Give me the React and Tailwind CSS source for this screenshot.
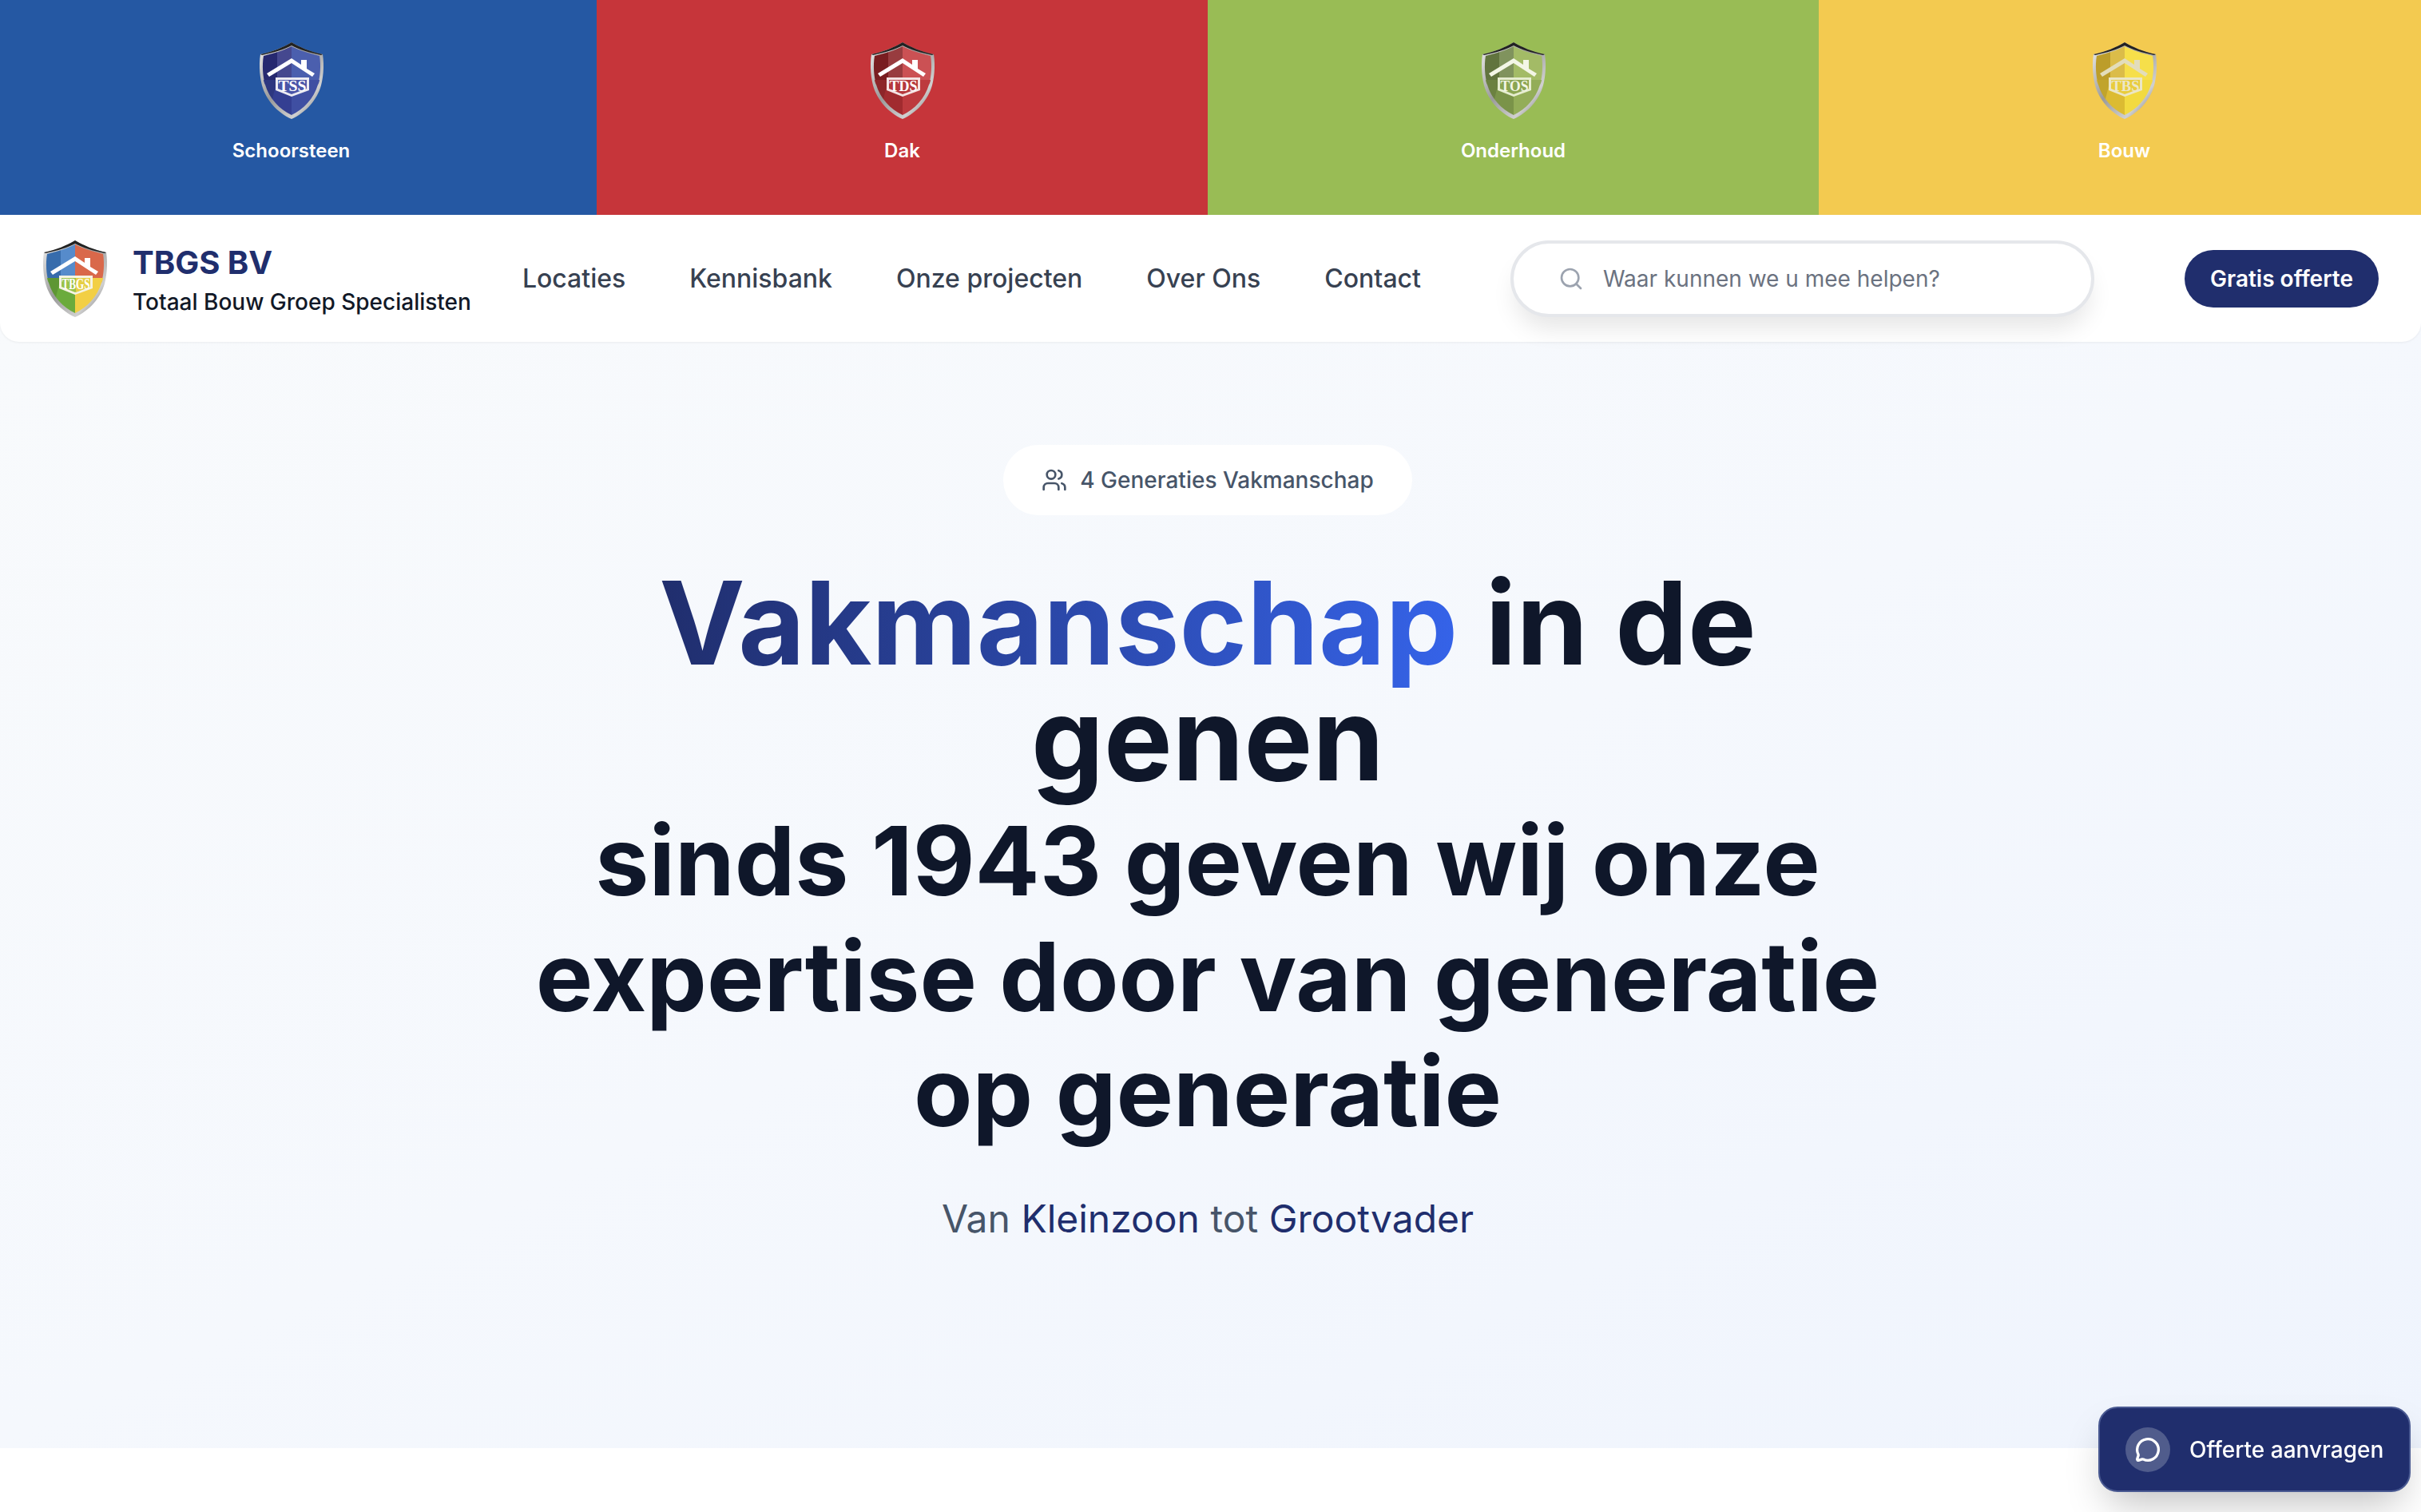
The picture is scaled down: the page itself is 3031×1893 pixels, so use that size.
import React from 'react';
import { Search, Users, MessageCircle } from 'lucide-react';

const inter = { fontFamily: 'Inter, sans-serif' };

const categories = [
  { name: 'Schoorsteen', bg: 'bg-[#2558a3]', box: 'w-[747px] pr-[18px]', letters: 'TSS', a: '#2c2f80', b: '#4b5fae', c: '#3f4fa2', d: '#343f92', panel: '#4a55a8', e: '#ffffff', f: '#ecebf2', t: '#ffffff' },
  { name: 'Dak', bg: 'bg-[#c6353a]', box: 'w-[765px]', letters: 'TDS', a: '#8a2225', b: '#cb5154', c: '#bd3a3e', d: '#a12b2f', panel: '#b5383c', e: '#ffffff', f: '#f4e3e3', t: '#ffffff' },
  { name: 'Onderhoud', bg: 'bg-[#99bc55]', box: 'w-[765px]', letters: 'TOS', a: '#6f8447', b: '#a3bb66', c: '#93ad58', d: '#7a9349', panel: '#8ba552', e: '#f3f6e6', f: '#e6edd0', t: '#f3f6e6' },
  { name: 'Bouw', bg: 'bg-[#f3ca50]', box: 'flex-1 pl-[11px]', letters: 'TBS', a: '#d6b330', b: '#f6df4a', c: '#f2da40', d: '#dcbb32', panel: '#e9cc3c', e: '#e3ddbb', f: '#ebe6c6', t: '#ece7c8' },
];

// shield logo, one variant per trade plus the full colour one in the header
const Shield = ({ a, b, c, d, panel, panelRight, e, f, t, letters, id }) => (
  <svg width="80" height="96" viewBox="0 0 80 96">
    <defs>
      <linearGradient id={id} x1="0" y1="0" x2="1" y2="1">
        <stop offset="0" stopColor="#f0f0f0" />
        <stop offset="0.45" stopColor="#9a9a9a" />
        <stop offset="0.75" stopColor="#d0d0d0" />
        <stop offset="1" stopColor="#555555" />
      </linearGradient>
    </defs>
    <path d="M40 0C30 6 16 12 1 15C-1 28 0 42 3 54C8 72 22 88 40 96C58 88 72 72 77 54C80 42 81 28 79 15C64 12 50 6 40 0Z" fill={`url(#${id})`} />
    <path d="M40 0C30 6 16 12 1 15L3 16C17 13 31 9 40 4C49 9 63 13 77 16L79 15C64 12 50 6 40 0Z" fill="#222222" />
    <path d="M40 5C31 10 17 14 5 17C3 29 4 42 7 53L40 53Z" fill={a} />
    <path d="M40 5C49 10 63 14 75 17C77 29 76 42 73 53L40 53Z" fill={b} />
    <path d="M40 47H75C75 49 74 51 73 53C68 70 55 84 40 91Z" fill={c} />
    <path d="M40 47H5C5 49 6 51 7 53C12 70 25 84 40 91Z" fill={d} />
    <path d="M17 14C13 15 9 16 5 17C3 29 4 42 7 53C9 60 12 66 16 71L22 47V12Z" fill="#000000" opacity="0.12" />
    <path d="M22 12C27 10 35 8 40 5V47H22Z" fill="#ffffff" opacity="0.12" />
    <path d="M9 39L40 20L52 28V22H59V33L69 39L66 43L40 26L12 43Z" fill={e} />
    <path d="M20 44H62V60L40 68L20 60Z" fill={f} />
    <path d="M23 47H59V58L40 65L23 58Z" fill={panel} />
    {panelRight && <path d="M41 47H59V58L41 65Z" fill={panelRight} />}
    <text x="41" y="61" textAnchor="middle" fontSize="19" fontWeight="700" fill={t} textLength="35" lengthAdjust="spacingAndGlyphs" fontFamily="Liberation Serif, serif">{letters}</text>
  </svg>
);

const navItems = ['Locaties', 'Kennisbank', 'Onze projecten', 'Over Ons', 'Contact'];

export default function App() {
  return (
    <div className="min-h-[1893px] bg-white" style={inter}>
      {/* Category strip */}
      <div className="flex h-[269px]">
        {categories.map((cat) => (
          <div key={cat.name} className={`${cat.bg} ${cat.box} flex flex-col items-center pt-[53px]`}>
            <Shield id={cat.letters} {...cat} />
            <span className="mt-[24px] text-[24px] leading-[32px] font-semibold text-white">{cat.name}</span>
          </div>
        ))}
      </div>

      {/* Header */}
      <header className="relative z-10 flex h-[159px] items-center rounded-b-[24px] bg-white pr-[53px] pl-[54px] shadow-[0_1px_3px_rgba(0,0,0,0.06)]">
        <Shield
          id="main"
          letters="TBGS"
          a="#3f7cc4"
          b="#d9684a"
          c="#f2cf45"
          d="#6bab3c"
          panel="#9cc24a"
          panelRight="#e6cf45"
          e="#ffffff"
          f="#f6f3e2"
          t="#ffffff"
        />
        <div className="mt-[8px] ml-[32px] flex flex-col">
          <span className="text-[40px] leading-[44px] font-bold text-[#202e6d]">TBGS BV</span>
          <span className="mt-[7px] text-[28px] leading-[40px] font-medium text-[#111827]">Totaal Bouw Groep Specialisten</span>
        </div>
        <nav className="ml-[64px] flex items-center gap-[80px]">
          {navItems.map((item) => (
            <a key={item} className="text-[32px] leading-[40px] font-medium text-[#374151]">{item}</a>
          ))}
        </nav>
        <div className="ml-[112px] flex h-[96px] w-[731px] items-center rounded-full border-4 border-[#e5e7eb] bg-white pl-[56px] shadow-[0_20px_30px_-6px_rgba(0,0,0,0.1)]">
          <Search size={32} strokeWidth={2} className="text-[#9ca3af]" />
          <span className="ml-[24px] text-[28px] text-[#6b7280]">Waar kunnen we u mee helpen?</span>
        </div>
        <button className="ml-auto flex h-[72px] w-[243px] items-center justify-center rounded-full bg-[#202e6d] text-[28px] font-semibold text-white">
          Gratis offerte
        </button>
      </header>

      {/* Hero */}
      <section className="-mt-[24px] flex h-[1409px] flex-col items-center bg-gradient-to-br from-[#f8fafc] via-[#f5f8fd] to-[#eff4fd] pt-[153px] pr-[7px]">
        <div className="flex h-[88px] w-[512px] items-center justify-center gap-[16px] rounded-full bg-white text-[#475569]">
          <Users size={32} strokeWidth={2} />
          <span className="text-[28px] font-medium">4 Generaties Vakmanschap</span>
        </div>
        <h1 className="mt-[72px] w-[1800px] text-center text-[120px] leading-[144.5px] font-bold text-[#0f172a]">
          <span className="text-[144px] leading-[120px]">
            <span className="bg-gradient-to-r from-[#202e6d] to-[#3563e9] bg-clip-text text-transparent">Vakmanschap</span> in de<br />
            genen
          </span><br />
          sinds 1943 geven wij onze<br />
          expertise door van generatie<br />
          op generatie
        </h1>
        <p className="mt-[58px] text-[48px] leading-[56px] text-[#475569]">
          Van <span className="text-[#202e6d]">Kleinzoon</span> tot <span className="text-[#202e6d]">Grootvader</span>
        </p>
      </section>

      {/* Floating quote button */}
      <button className="fixed right-[13px] bottom-[25px] z-20 flex h-[107px] w-[391px] items-center rounded-[24px] border-2 border-[#4a5a92] bg-[#202e6d] pl-[32px] shadow-[0_25px_50px_-12px_rgba(0,0,0,0.25)]">
        <span className="flex h-[56px] w-[56px] items-center justify-center rounded-full bg-[#505c8c] text-white">
          <MessageCircle size={32} strokeWidth={2.5} />
        </span>
        <span className="ml-[24px] text-[28px] font-medium text-white">Offerte aanvragen</span>
      </button>
    </div>
  );
}
